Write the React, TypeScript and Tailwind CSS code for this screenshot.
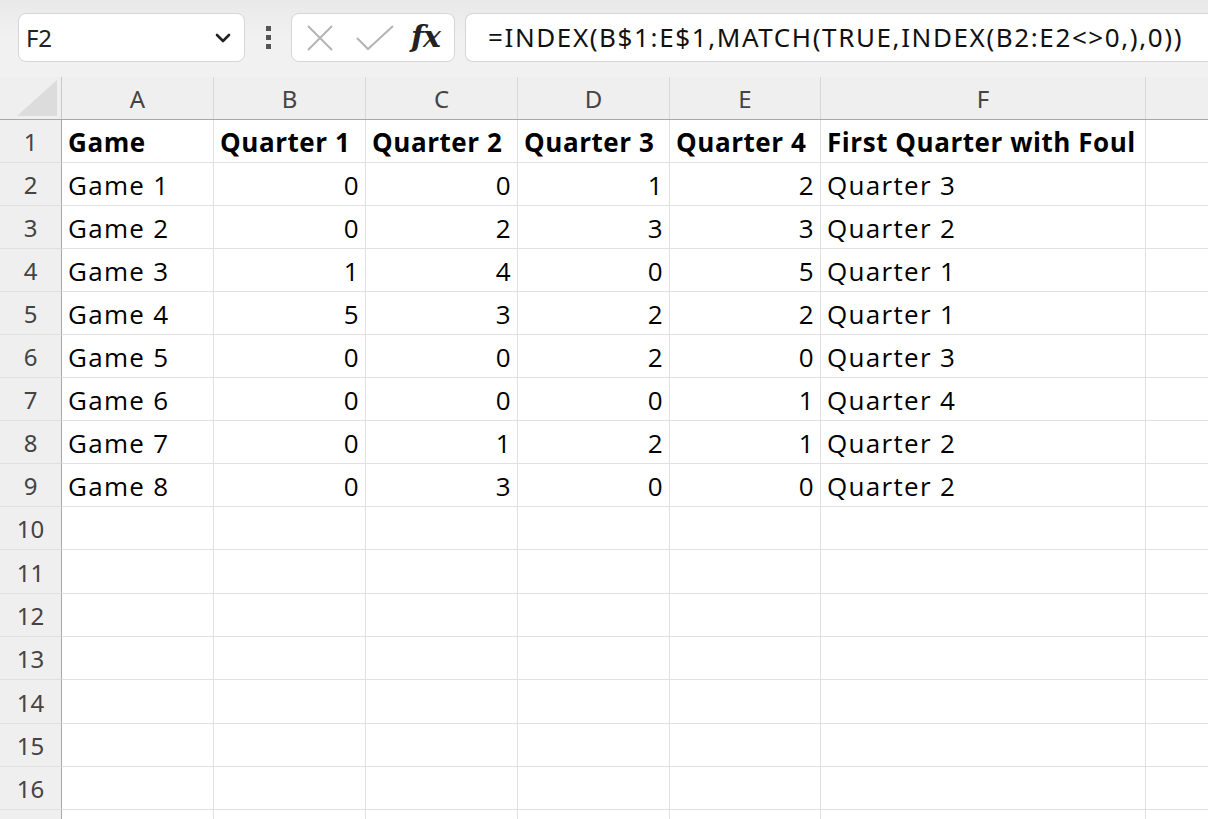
const COLS = ["A", "B", "C", "D", "E", "F", ""];

const HEAD = ["Game", "Quarter 1", "Quarter 2", "Quarter 3", "Quarter 4", "First Quarter with Foul"];

const DATA: [string, number, number, number, number, string][] = [
  ["Game 1", 0, 0, 1, 2, "Quarter 3"],
  ["Game 2", 0, 2, 3, 3, "Quarter 2"],
  ["Game 3", 1, 4, 0, 5, "Quarter 1"],
  ["Game 4", 5, 3, 2, 2, "Quarter 1"],
  ["Game 5", 0, 0, 2, 0, "Quarter 3"],
  ["Game 6", 0, 0, 0, 1, "Quarter 4"],
  ["Game 7", 0, 1, 2, 1, "Quarter 2"],
  ["Game 8", 0, 3, 0, 0, "Quarter 2"],
];

const GRID = "grid grid-cols-[62px_152px_152px_152px_152px_151px_325px_1fr]";
const CELL_FONT = "font-['Open_Sans','Liberation_Sans',sans-serif] text-[26px] text-black";
const UI_FONT = "font-['Noto_Sans','Liberation_Sans',sans-serif]";

function FormulaBar() {
  return (
    <div className="h-[77px] bg-gradient-to-b from-[#e9e9e9] to-[#f1f1f1] via-[#f1f1f1] flex items-center pl-[18px] pb-[2px]">
      <div className="w-[227px] h-[49px] bg-white border border-[#d6d6d6] rounded-[8px] flex items-center justify-between pl-[7px] pr-[13px]">
        <span className={`${UI_FONT} text-[24px] text-[#222] tracking-[-0.3px]`}>F2</span>
        <svg width="16" height="10" viewBox="0 0 16 10">
          <path d="M2 2 L8 8 L14 2" fill="none" stroke="#222" strokeWidth="2.6" strokeLinecap="round" strokeLinejoin="round" />
        </svg>
      </div>
      <div className="w-[46px] flex flex-col items-center gap-[4px]">
        <span className="w-[5px] h-[5px] bg-[#555]" />
        <span className="w-[5px] h-[5px] bg-[#555]" />
        <span className="w-[5px] h-[5px] bg-[#555]" />
      </div>
      <div className="w-[164px] h-[49px] bg-white border border-[#d6d6d6] rounded-[8px] flex items-center pl-[14px]">
        <svg width="28" height="28" viewBox="0 0 28 28">
          <path d="M2 2 L26 26 M26 2 L2 26" stroke="#b4b4b4" strokeWidth="2" />
        </svg>
        <svg width="38" height="26" viewBox="0 0 38 26" className="ml-[22px]">
          <path d="M1 13 L12 24 L37 1" fill="none" stroke="#b4b4b4" strokeWidth="2" />
        </svg>
        <span className="ml-[17px] font-['DejaVu_Serif','Liberation_Serif',serif] italic font-bold text-[30px] text-[#222] leading-none -mt-[2px] tracking-[-1px]">
          fx
        </span>
      </div>
      <div className="ml-[10px] flex-1 h-[49px] bg-white border border-r-0 border-[#d6d6d6] rounded-l-[8px] flex items-center pl-[22px] overflow-hidden">
        <span className={`${UI_FONT} text-[26px] text-[#111] tracking-[1.6px] whitespace-nowrap`}>
          =INDEX(B$1:E$1,MATCH(TRUE,INDEX(B2:E2&lt;&gt;0,),0))
        </span>
      </div>
    </div>
  );
}

function ColumnHeader() {
  return (
    <div className={`${GRID} h-[43px] bg-[#efefef] border-b border-[#a8a8a8]`}>
      <div className="border-r border-[#c8c8c8] relative">
        <svg width="40" height="36" viewBox="0 0 40 36" className="absolute right-[4px] bottom-[3px]">
          <path d="M40 0 L40 36 L0 36 Z" fill="#dcdcdc" />
        </svg>
      </div>
      {COLS.map((c, i) => (
        <div
          key={i}
          className={`flex items-center justify-center pt-[2px] ${UI_FONT} text-[24px] text-[#444] ${i < 6 ? "border-r border-[#d8d8d8]" : ""}`}
        >
          {c}
        </div>
      ))}
    </div>
  );
}

function RowNum({ n }: { n?: number }) {
  return (
    <div className={`bg-[#efefef] border-r border-[#a8a8a8] border-b border-b-[#e0e0e0] flex items-center justify-center pt-[2px] ${UI_FONT} text-[24px] text-[#444]`}>
      {n}
    </div>
  );
}

function Cell({ children, right, bold, last }: { children?: React.ReactNode; right?: boolean; bold?: boolean; last?: boolean }) {
  return (
    <div
      className={`border-b border-[#e1e1e1] ${last ? "" : "border-r"} flex items-center ${right ? "justify-end pl-[6px] pr-[5px]" : "px-[6px]"} pt-[3px] whitespace-nowrap overflow-visible ${CELL_FONT} ${bold ? "font-bold tracking-[0.55px]" : "tracking-[1.3px]"}`}
    >
      {children}
    </div>
  );
}

export default function App() {
  const rows: React.ReactNode[] = [];
  rows.push(
    <div key={1} className={`${GRID} h-[43px]`}>
      <RowNum n={1} />
      {HEAD.map((h, i) => (
        <Cell key={i} bold>
          {h}
        </Cell>
      ))}
      <Cell last />
    </div>,
  );
  DATA.forEach((r, idx) => {
    rows.push(
      <div key={idx + 2} className={`${GRID} h-[43px]`}>
        <RowNum n={idx + 2} />
        <Cell>{r[0]}</Cell>
        <Cell right>{r[1]}</Cell>
        <Cell right>{r[2]}</Cell>
        <Cell right>{r[3]}</Cell>
        <Cell right>{r[4]}</Cell>
        <Cell>{r[5]}</Cell>
        <Cell last />
      </div>,
    );
  });
  for (let n = 10; n <= 17; n++) {
    rows.push(
      <div key={n} className={`${GRID} ${n === 11 || n === 14 ? "h-[44px]" : "h-[43px]"}`}>
        <RowNum n={n < 17 ? n : undefined} />
        <Cell />
        <Cell />
        <Cell />
        <Cell />
        <Cell />
        <Cell />
        <Cell last />
      </div>,
    );
  }

  return (
    <div className="w-[1208px] h-[819px] overflow-hidden bg-white">
      <FormulaBar />
      <ColumnHeader />
      {rows}
    </div>
  );
}
